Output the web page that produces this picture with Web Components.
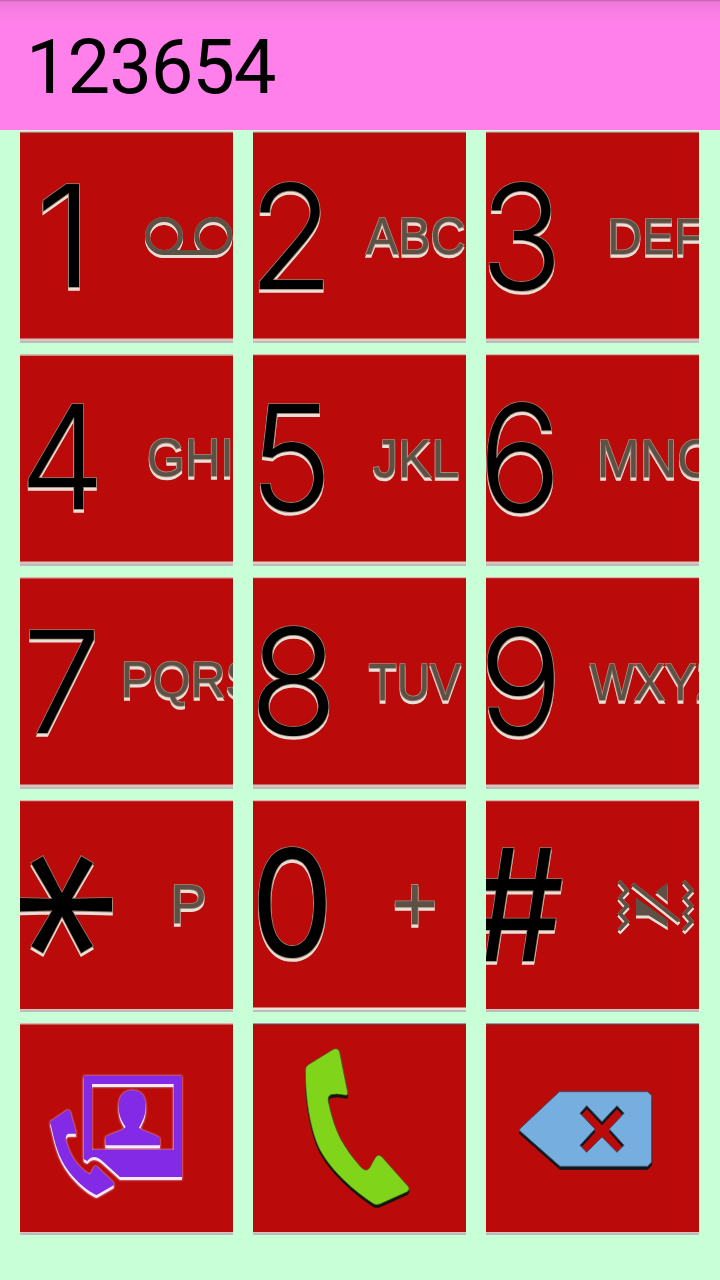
<!DOCTYPE html>
<html lang="en">
<head>
<meta charset="utf-8">
<title>Dialer</title>
<style>
html,body{margin:0;padding:0;background:#c8ffd6}
body{width:720px;height:1280px;overflow:hidden}
</style>
</head>
<body>
<dial-pad></dial-pad>
<script>
const meter = document.createElement('canvas').getContext('2d');

/* Text scaled so that its ink fills the box [left, top, right, bottom] of the key. */
function inkText(text, box, font, weight, kind, turn) {
  meter.font = `${weight} 100px ${font}`;
  const m = meter.measureText(text);
  const l = -m.actualBoundingBoxLeft, r = m.actualBoundingBoxRight;
  const t = -m.actualBoundingBoxAscent, b = m.actualBoundingBoxDescent;
  const [x0, y0, x1, y1] = box;
  const style = `font:${weight} 100px ${font}`;
  let matrix;
  if (turn) {
    const sx = (x1 - x0) / (b - t), sy = (y1 - y0) / (r - l);
    matrix = `matrix(0 ${sy} ${-sx} 0 ${x1 + t * sx} ${y0 - l * sy})`;
  } else {
    const sx = (x1 - x0) / (r - l), sy = (y1 - y0) / (b - t);
    matrix = `matrix(${sx} 0 0 ${sy} ${x0 - l * sx} ${y0 - t * sy})`;
  }
  return `<g class="${kind}"><text style='${style}' transform="${matrix}">${text}</text></g>`;
}

class DialDisplay extends HTMLElement {
  constructor() {
    super();
    this.attachShadow({mode: 'open'}).innerHTML = `<style>
      :host{display:flex;align-items:center;box-sizing:border-box;height:130px;padding:0 0 0 26px;
        font:76px/88px Roboto,"Noto Sans",sans-serif;letter-spacing:-1.15px;color:#000;
        background:linear-gradient(#b25ca5 0,#d970c8 1px,#ed79d9 2px,#f47be0 8px,#fc80e8 18px,#ff80ea 24px)}
      span{display:block;padding-top:4px}
    </style><span><slot></slot></span>`;
  }
}
customElements.define('dial-display', DialDisplay);

class DialKey extends HTMLElement {
  constructor() {
    super();
    this.attachShadow({mode: 'open'});
  }
  connectedCallback() {
    const key = KEYS[this.getAttribute('name')];
    const face = key.face();
    this.shadowRoot.innerHTML = `<style>
      :host{display:block;width:213px;height:212px;overflow:hidden;background:#ba0b0a;cursor:pointer}
      svg{display:block}
      .digit{fill:#000;filter:drop-shadow(0 3.2px 0 #eadfd7)}
      .digit *{stroke:#967f6c;stroke-width:1.6px;paint-order:stroke;vector-effect:non-scaling-stroke}
      .sub{fill:#5d5045;filter:drop-shadow(0 3px 0 #eadfd7)}
      .sub *{stroke:#a08d7e;stroke-width:1.6px;paint-order:stroke;vector-effect:non-scaling-stroke}
      .line{fill:none;stroke:#5d5045;filter:drop-shadow(0 3px 0 #eadfd7) drop-shadow(0 0 .5px #b7a493)}
      .solid{fill:#5d5045;filter:drop-shadow(0 3px 0 #eadfd7)}
      .video{fill:#822ae6;filter:drop-shadow(0 3px 0 #f4e9f4) drop-shadow(0 0 .8px #e8c8f0)}
      .call{fill:#80d51a;stroke:#3f5d2b;stroke-width:2;filter:drop-shadow(0 3px .3px #10170c)}
      .erase{fill:#76aee0;stroke:#36536b;stroke-width:3;filter:drop-shadow(0 3px .2px #10161c)}
    </style>
    <svg width="213" height="212" viewBox="0 0 213 212">${face}
      <path d="M0 .5H213" stroke="${key.top || '#dfb3ac'}"/>
      <path d="M0 1.5H213" stroke="${key.top2 || '#bd3029'}"/>
      <path d="M0 ${key.thin ? 209.5 : 208.8}H213" stroke="${key.lip || '#d9c3bd'}" stroke-width="${key.thin ? 1 : 2.4}"/>
      <path d="M0 211H213" stroke="#bcbcbc" stroke-width="2"/>
    </svg>`;
  }
}

const DIGIT = 'Inter,"Open Sans",sans-serif', SUB = '"Liberation Sans",sans-serif';
const pair = (d, db, s, sb, w = 350) => () =>
  inkText(d, db, DIGIT, w, 'digit') + (s ? inkText(s, sb, SUB, 400, 'sub') : '');

const KEYS = {
  one: {top: '#dccfc8', top2: '#a87064', face: () => inkText('1', [22.7, 52.5, 59.5, 156], DIGIT, 270, 'digit') +
    '<g class="line" stroke-width="5"><circle cx="144" cy="105" r="16.5"/><circle cx="193.3" cy="105" r="16.5"/><path d="M144 121.5H193"/></g>'},
  two: {top: '#dccfc8', top2: '#a87064', lip: '#e3cdbf', face: pair('2', [6.5, 50.3, 70.3, 157.5], 'ABC', [113, 86.5, 211, 123.5])},
  three: {top: '#dccfc8', top2: '#a87064', face: pair('3', [2.5, 50.5, 68.8, 160], 'DEF', [125.2, 88.5, 216, 123])},
  four: {top2: '#c29283', face: pair('4', [8, 49.5, 76.5, 155], 'GHI', [129.5, 85, 209.5, 123])},
  five: {lip: '#e3cdbf', face: pair('5', [6.5, 50, 70.5, 158.5], 'JKL', [120.5, 86.5, 205, 123.5])},
  six: {face: pair('6', [.8, 47.5, 66.8, 159.2], 'MNO', [115, 85.5, 229, 123.5])},
  seven: {top2: '#c45a4f', face: pair('7', [9.5, 52.5, 74.2, 156], 'PQRS', [104.5, 84.5, 236, 129.5])},
  eight: {face: pair('8', [5.2, 48, 75.8, 159.3], 'TUV', [116.5, 87, 208, 123.5])},
  nine: {face: pair('9', [1.2, 48, 68.2, 159.5], 'WXYZ', [104, 87, 237, 122.5])},
  star: {thin: true, face: () => inkText('*', [-7, 53.8, 93, 155], DIGIT, 300, 'digit', true) + inkText('P', [154.5, 84.5, 184, 123], SUB, 400, 'sub')},
  zero: {lip: '#f0e2da', face: pair('0', [4.5, 46.5, 73.8, 158], '+', [142, 83.2, 181.5, 123.5], 370)},
  hash: {thin: true, face: () => inkText('#', [-12.5, 46.8, 76.5, 160.5], DIGIT, 400, 'digit') +
    `<g class="line" stroke-width="3.8"><path d="M133 81L141 90.5L134 98L141 106L134 113.5L141 121.5L133 130"/><path d="M197.6 81L205.6 90.5L198.6 98L205.6 106L198.6 113.5L205.6 121.5L197.6 130"/><path d="M146.5 84L193 121"/></g>
     <g class="solid"><path d="M169.3 91.7L181.7 82.7V101.7Z"/><path d="M150 97.7L181.7 120V127.3L162.7 115.5H150Z"/></g>`},
  video: {thin: true, top2: '#bd6057', face: () => `<g class="video"><g transform="translate(-10 -8) scale(.33333)">
    <path fill-rule="evenodd" d="M221 182H516V486H330L277 438Q250 414 232 438L221 432ZM246 207V404H491V207Z"/>
    <path d="M286 391V366C310 352 335 350 347 336C335 317 326 302 326 275C326 240 345 226 367 226C390 226 407 240 407 272C407 302 398 317 387 338C400 350 430 355 450 369V391Z"/>
    <path d="M120 320L173 284L180 288L199 356H176Q165 359 168 378C180 420 200 455 238 478C246 475 250 452 258 452L311 503V511L260 540C230 528 180 485 155 435C135 395 128 350 120 320Z"/></g></g>`},
  call: {thin: true, top: '#9b99aa', top2: '#7a3335', face: () => `<g class="call"><g transform="translate(-8 -8) scale(.33333)">
    <path d="M181 165Q181 155 190 149L265 103Q280 97 284 112L308 232Q310 243 298 240Q275 235 258 239Q247 243 250 260Q265 330 287 372Q310 415 348 457Q365 474 375 457L389 431Q399 413 411 426L489 514Q497 522 487 530L407 566Q395 573 385 566C330 530 260 470 225 405C195 345 181 250 181 165Z"/></g></g>`},
  erase: {thin: true, top: '#9b99aa', top2: '#7a3335', face: () => `<g class="erase"><g transform="translate(-6 -8) scale(.33333)">
    <path fill-rule="evenodd" d="M119 342L238 230H503L515 242V441L503 454H240L119 347ZM320 272L366 320L411 272L432 295L388 342L432 391L411 412L366 366L320 412L300 391L345 342L300 295Z"/></g></g>`}
};
customElements.define('dial-key', DialKey);

class DialPad extends HTMLElement {
  constructor() {
    super();
    this.attachShadow({mode: 'open'}).innerHTML = `<style>
      :host{display:flex;flex-direction:column;width:720px;height:1280px;background:#c8ffd6}
      main{display:grid;grid-template-columns:repeat(3,213px);gap:11px 20px;padding:1px 20px 0}
    </style>
    <dial-display>123654</dial-display>
    <main>${Object.keys(KEYS).map(n => `<dial-key name="${n}"></dial-key>`).join('')}</main>`;
  }
}
customElements.define('dial-pad', DialPad);
</script>
</body>
</html>
